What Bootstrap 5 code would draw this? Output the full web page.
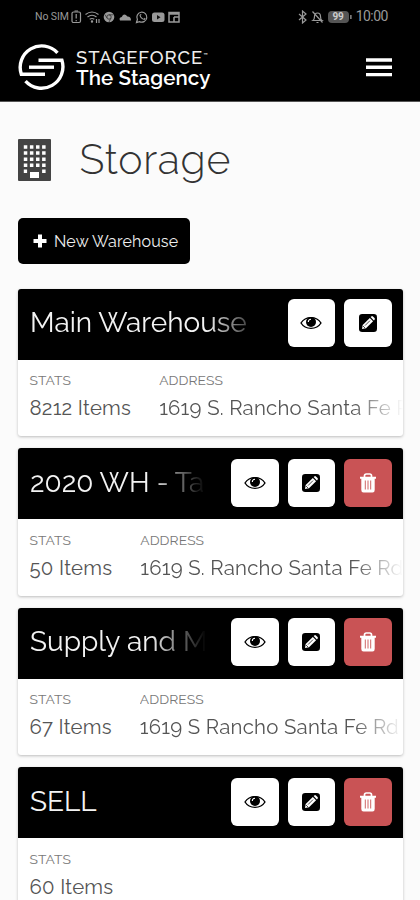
<!DOCTYPE html>
<html lang="en">
<head>
<meta charset="utf-8">
<meta name="viewport" content="width=device-width, initial-scale=1">
<title>Storage</title>
<link href="https://cdn.jsdelivr.net/npm/bootstrap@5.3.0/dist/css/bootstrap.min.css" rel="stylesheet">
<style>
body{background:#fbfbfb;color:#444;font-family:Raleway,Lato,"Open Sans",sans-serif;font-variant-numeric:oldstyle-nums;overflow:hidden;height:900px}
svg{display:block;flex:none}
.app-top{background:#000;height:102px;border-bottom:1px solid #555}
.status{height:33px;padding:0 32px 0 35px;color:#999;font:12px/33px Roboto,sans-serif}
.status .sim{font-size:10.5px;letter-spacing:-.1px;width:35px;white-space:nowrap}
.status .clock{font-size:14px;letter-spacing:-.5px}
.battery{background:#555;color:#ccc;border-radius:4px;width:21px;height:12px;font-size:10px;line-height:12px;font-weight:700;text-align:center}
.brandbar{height:68px;padding:0 28px 0 18px}
.brand-1{font-size:18.5px;line-height:20px;font-weight:500;color:#eee;letter-spacing:.9px;white-space:nowrap;margin-left:-1px;margin-top:-2px}
.brand-1 sup{font-size:6px;top:-1.1em;letter-spacing:0}
.brand-2{font-size:20.5px;line-height:22px;font-weight:600;color:#fff;letter-spacing:.1px;white-space:nowrap;margin-top:-1px;margin-left:-1px}
.page{padding:0 17px 0 18px}
.head-row{height:116px;gap:28.5px}
.page-title{font-size:41px;font-weight:300;line-height:48px;color:#333;letter-spacing:.75px}
.btn-new,.btn-new:hover{width:172px;height:46px;background:#000;color:#eee;font-size:16px;border-radius:5px;padding:0 0 0 14px;gap:7px;letter-spacing:.15px;white-space:nowrap}
.btn-new span{padding-top:1px}
.stack{margin-top:24.5px;gap:12px}
.unit{width:385px;height:147.6px;border:0;border-radius:3px;background:#fff;box-shadow:0 1px 3px rgba(0,0,0,.25);overflow:hidden}
.unit-head{height:71px;flex:none;background:#000;padding:0 11.5px 2px 12px;gap:9px}
.unit-title{font-size:28px;line-height:40px;font-weight:400;color:#f3f3f3;white-space:nowrap;overflow:hidden;margin-right:16px}
.fade-title{-webkit-mask-image:linear-gradient(to left,transparent 0,#000 56px);mask-image:linear-gradient(to left,transparent 0,#000 56px)}
.act{width:47.5px;height:48px;border:0;border-radius:6px;background:#fff;color:#000;padding:0;flex:none}
.act-del{background:#c95355;color:#fff}
.unit-body{padding:11.5px 0 0 11.5px;gap:28px}
.lbl{font-size:13.8px;line-height:19px;color:#777;letter-spacing:.1px}
.val{font-size:20.4px;line-height:28px;margin-top:4px;font-weight:400;color:#555;letter-spacing:.22px;white-space:nowrap;overflow:hidden}
.fade-val{-webkit-mask-image:linear-gradient(to left,transparent 0,#000 50px);mask-image:linear-gradient(to left,transparent 0,#000 50px)}
</style>
<script src="https://cdn.jsdelivr.net/npm/bootstrap@5.3.0/dist/js/bootstrap.bundle.min.js"></script>
</head>
<body>
<svg width="0" height="0" class="position-absolute">
<symbol id="eye" viewBox="0 0 22 16"><path d="M1 8C5.500.8 16.500.8 21 8 16.500 15.200 5.500 15.200 1 8Z" fill="none" stroke="currentColor" stroke-width="1.400"/><circle cx="11" cy="7" r="5" fill="currentColor"/><path d="M8.300 7A2.800 2.800 0 0 1 11 4.200" fill="none" stroke="#fff" stroke-width="1.100"/></symbol>
<symbol id="edit" viewBox="0 0 18 18"><rect width="18" height="18" rx="3.200" fill="currentColor"/><path d="M3 15l.7-4L10.800 3.900l3.300 3.300L7 14.300z" fill="#fff"/><path d="M11.600 3.100l.7-.7q.8-.6 1.600.1l1.600 1.600q.7.8.1 1.600l-.7.7z" fill="#fff"/><path d="M6 11.600l5-5M4 12l2 2" stroke="#000" stroke-width=".7"/></symbol>
<symbol id="trash" viewBox="0 0 18 20"><path d="M5.500 4V2.800Q5.500 1 7.300 1h3.400q1.800 0 1.800 1.800V4" fill="none" stroke="currentColor" stroke-width="1.700"/><path d="M1 3.700h16v2.100h-1.300V17q0 2.500-2.200 2.500h-9Q2.300 19.500 2.300 17V5.800H1z" fill="currentColor"/><path d="M6.300 7.500v9M9 7.500v9M11.700 7.500v9" stroke="#c95355" stroke-width=".9"/></symbol>
</svg>
<header class="app-top">
<div class="status d-flex align-items-center justify-content-between">
<div class="d-flex align-items-center">
<span class="sim">No SIM</span>
<svg width="147" height="14" viewBox="0 0 147 14" fill="none" stroke="#999" stroke-width="1.200"><rect x="2" y="2" width="8.500" height="10.500" rx="1.500"/><path d="M4.500 1h3.500M6.200 4v4.500M6.200 10v1.300"/><path d="M15.500 4.500q6.500-5 13 0M17.500 7q4.500-3.500 9 0M19.700 9.300q2.300-1.600 4.600 0"/><circle cx="22" cy="11.500" r=".6"/><path d="M26.500 9v4M29 9v4"/><circle cx="39" cy="7" r="5.300" fill="#999" stroke="none"/><circle cx="39" cy="7" r="2.200" stroke="#333" stroke-width=".9"/><path d="M39 4.800h4.500M37 8l-2.200-3.500M41 8l-2 4" stroke="#333" stroke-width=".8"/><path d="M50 10.500q-1.500-3 1.700-3.500Q54 2.500 57.500 6.500q3.500 0 3.500 4z" fill="#999" stroke="none"/><path d="M66.500 12.500l.9-3a5 5 0 1 1 2.100 2.100z"/><path d="M70 5q.5 3.500 4.500 4.500M70 5l1.300-.5M74.500 9.500l.5-1.500"/><rect x="82" y="2.500" width="12.500" height="9.500" rx="2.500" fill="#999" stroke="none"/><path d="M87 5l3.500 2.200L87 9.500z" fill="#111" stroke="none"/><path d="M99 2.500h10v9.500h-10zM99 4h10M104 7h5M104 7v5" stroke-width="1.500"/></svg>
</div>
<div class="d-flex align-items-center">
<svg class="me-1" width="26" height="14" viewBox="0 0 26 14" fill="none" stroke="#999" stroke-width="1.200"><path d="M1 4l7 6-3.500 3V1L8 4 1 10"/><path d="M15 10.500q1.500-1 1.500-4 0-3.500 3-3.500t3 3.500q0 3 1.500 4zM18.500 12.500h2M14.500 1.500l10 11"/></svg>
<span class="battery">99</span><svg width="7" height="12" viewBox="0 0 7 12"><path d="M1 4h1.700v4H1z" fill="#777"/></svg>
<span class="clock">10:00</span>
</div>
</div>
<div class="brandbar d-flex align-items-center justify-content-between">
<div class="d-flex align-items-center">
<svg width="47" height="48" viewBox="0 0 47 48" fill="none" stroke="#fff" stroke-width="3.400"><path d="M39.500 9.800A21.500 21.500 0 0 0 3.300 31.200H27"/><path d="M7.500 38.200A21.500 21.500 0 0 0 43.900 17.200H20.500"/><path d="M11 24.200H36"/></svg>
<div class="ms-2 ps-1 pt-1">
<div class="brand-1">STAGEFORCE<sup>™</sup></div>
<div class="brand-2">The Stagency</div>
</div>
</div>
<svg width="26" height="19" viewBox="0 0 26 19"><path d="M0 2h26M0 9.300h26M0 16.600h26" stroke="#fff" stroke-width="3.400"/></svg>
</div>
</header>
<main class="page">
<div class="head-row d-flex align-items-center">
<svg width="33" height="42" viewBox="0 0 33 42"><rect width="33" height="42" rx="1" fill="#444"/><path d="M5.800 8h22M5.800 14.100h22M5.800 20.200h22M5.800 26.300h22" stroke="#fff" stroke-width="3.500" stroke-dasharray="3.500 2.600"/><path d="M5.800 32.200h3.300M24.100 32.200h3.500" stroke="#fff" stroke-width="3.500"/><path d="M12 33h9v6h-9z" fill="#fff"/></svg>
<h1 class="page-title mb-0">Storage</h1>
</div>
<button class="btn btn-new d-flex align-items-center"><svg width="14" height="14" viewBox="0 0 14 14"><path d="M7 .5v13M.5 7h13" stroke="#fff" stroke-width="4"/></svg><span>New Warehouse</span></button>
<div class="stack d-flex flex-column">
<section class="card unit">
<div class="unit-head d-flex align-items-center"><h2 class="unit-title fade-title flex-grow-1 mb-0">Main Warehouse</h2><button class="btn act d-flex align-items-center justify-content-center"><svg width="22" height="16"><use href="#eye"/></svg></button><button class="btn act d-flex align-items-center justify-content-center"><svg width="18" height="18"><use href="#edit"/></svg></button></div>
<div class="unit-body d-flex"><div class="flex-shrink-0"><div class="lbl">STATS</div><div class="val">8212 Items</div></div><div class="flex-grow-1 overflow-hidden"><div class="lbl">ADDRESS</div><div class="val fade-val">1619 S. Rancho Santa Fe Rd</div></div></div>
</section>
<section class="card unit">
<div class="unit-head d-flex align-items-center"><h2 class="unit-title fade-title flex-grow-1 mb-0">2020 WH - Ta</h2><button class="btn act d-flex align-items-center justify-content-center"><svg width="22" height="16"><use href="#eye"/></svg></button><button class="btn act d-flex align-items-center justify-content-center"><svg width="18" height="18"><use href="#edit"/></svg></button><button class="btn act act-del d-flex align-items-center justify-content-center"><svg width="18" height="20"><use href="#trash"/></svg></button></div>
<div class="unit-body d-flex"><div class="flex-shrink-0"><div class="lbl">STATS</div><div class="val">50 Items</div></div><div class="flex-grow-1 overflow-hidden"><div class="lbl">ADDRESS</div><div class="val fade-val">1619 S. Rancho Santa Fe Rd</div></div></div>
</section>
<section class="card unit">
<div class="unit-head d-flex align-items-center"><h2 class="unit-title fade-title flex-grow-1 mb-0">Supply and M</h2><button class="btn act d-flex align-items-center justify-content-center"><svg width="22" height="16"><use href="#eye"/></svg></button><button class="btn act d-flex align-items-center justify-content-center"><svg width="18" height="18"><use href="#edit"/></svg></button><button class="btn act act-del d-flex align-items-center justify-content-center"><svg width="18" height="20"><use href="#trash"/></svg></button></div>
<div class="unit-body d-flex"><div class="flex-shrink-0"><div class="lbl">STATS</div><div class="val">67 Items</div></div><div class="flex-grow-1 overflow-hidden"><div class="lbl">ADDRESS</div><div class="val fade-val">1619 S Rancho Santa Fe Rd</div></div></div>
</section>
<section class="card unit">
<div class="unit-head d-flex align-items-center"><h2 class="unit-title flex-grow-1 mb-0">SELL</h2><button class="btn act d-flex align-items-center justify-content-center"><svg width="22" height="16"><use href="#eye"/></svg></button><button class="btn act d-flex align-items-center justify-content-center"><svg width="18" height="18"><use href="#edit"/></svg></button><button class="btn act act-del d-flex align-items-center justify-content-center"><svg width="18" height="20"><use href="#trash"/></svg></button></div>
<div class="unit-body d-flex"><div><div class="lbl">STATS</div><div class="val">60 Items</div></div></div>
</section>
</div>
</main>
</body>
</html>
